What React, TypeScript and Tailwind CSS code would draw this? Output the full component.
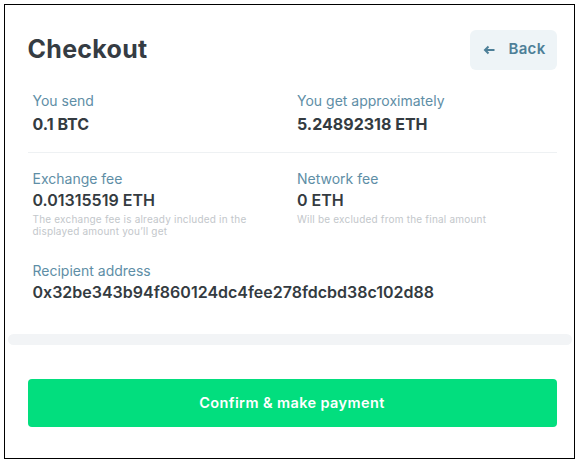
import React from "react";

const Field = ({
  label,
  value,
  note,
}: {
  label: string;
  value: string;
  note?: React.ReactNode;
}) => (
  <div className="px-[5px]">
    <div className="text-[14px] leading-[18px] text-[#5e8ea6]">{label}</div>
    <div className="mt-[2px] text-[16px] leading-[20px] font-semibold text-[#343b41]">
      {value}
    </div>
    {note && (
      <div className="mt-[3px] text-[10px] leading-[12px] tracking-[0.2px] text-[#c3c7cb]">
        {note}
      </div>
    )}
  </div>
);

export default function App() {
  return (
    <div
      className="w-[578px] h-[462px] bg-white pt-[4px] pl-[4px]"
      style={{ fontFamily: "Inter, 'Open Sans', sans-serif" }}
    >
      <div className="w-[571px] h-[455px] border-[1.5px] border-black overflow-hidden bg-white px-[2.5px] pt-[2.5px]">
        {/* summary card */}
        <div className="bg-white rounded-b-lg pl-5 pr-[15px] pt-[22px] pb-[32px]">
          <div className="flex items-center justify-between h-[40px]">
            <h1 className="text-[25px] font-bold text-[#353c43] tracking-[0.3px]">
              Checkout
            </h1>
            <button
              type="button"
              className="flex items-center gap-[14px] h-[40px] w-[87px] pl-[13px] rounded-md bg-[#eef4f7] text-[#4d7f98] text-[15px] font-semibold tracking-[0.3px]"
            >
              <svg width="12" height="10" viewBox="0 0 12 10" fill="none">
                <path
                  d="M11.5 5H2M5.5 1.5 2 5l3.5 3.5"
                  stroke="currentColor"
                  strokeWidth="2"
                />
              </svg>
              <span>Back</span>
            </button>
          </div>

          <div className="grid grid-cols-2 mt-[22px] pb-[18px] border-b border-[#eef1f3]">
            <div className="px-[5px]">
              <div className="text-[14px] leading-[18px] text-[#5e8ea6]">You send</div>
              <div className="mt-[4px] text-[16px] leading-[20px] font-bold text-[#343b41]">
                0.1 BTC
              </div>
            </div>
            <div className="px-[5px]">
              <div className="text-[14px] leading-[18px] text-[#5e8ea6]">
                You get approximately
              </div>
              <div className="mt-[4px] text-[16px] leading-[20px] font-bold text-[#343b41]">
                5.24892318 ETH
              </div>
            </div>
          </div>

          <div className="grid grid-cols-2 mt-[17px]">
            <Field
              label="Exchange fee"
              value="0.01315519 ETH"
              note={
                <>
                  The exchange fee is already included in the
                  <br />
                  displayed amount you’ll get
                </>
              }
            />
            <Field
              label="Network fee"
              value="0 ETH"
              note="Will be excluded from the final amount"
            />
          </div>

          <div className="mt-[25px]">
            <Field
              label="Recipient address"
              value="0x32be343b94f860124dc4fee278fdcbd38c102d88"
            />
          </div>
        </div>

        <div className="h-[11px] bg-[#f2f4f6] rounded-md" />

        {/* action card */}
        <div className="bg-white rounded-t-lg pl-5 pr-[15px] pt-[34px]">
          <button
            type="button"
            className="w-full h-[48px] rounded-[4px] bg-[#02de7e] text-white text-[14.5px] font-semibold tracking-[0.4px]"
          >
            Confirm &amp; make payment
          </button>
        </div>
      </div>
    </div>
  );
}
